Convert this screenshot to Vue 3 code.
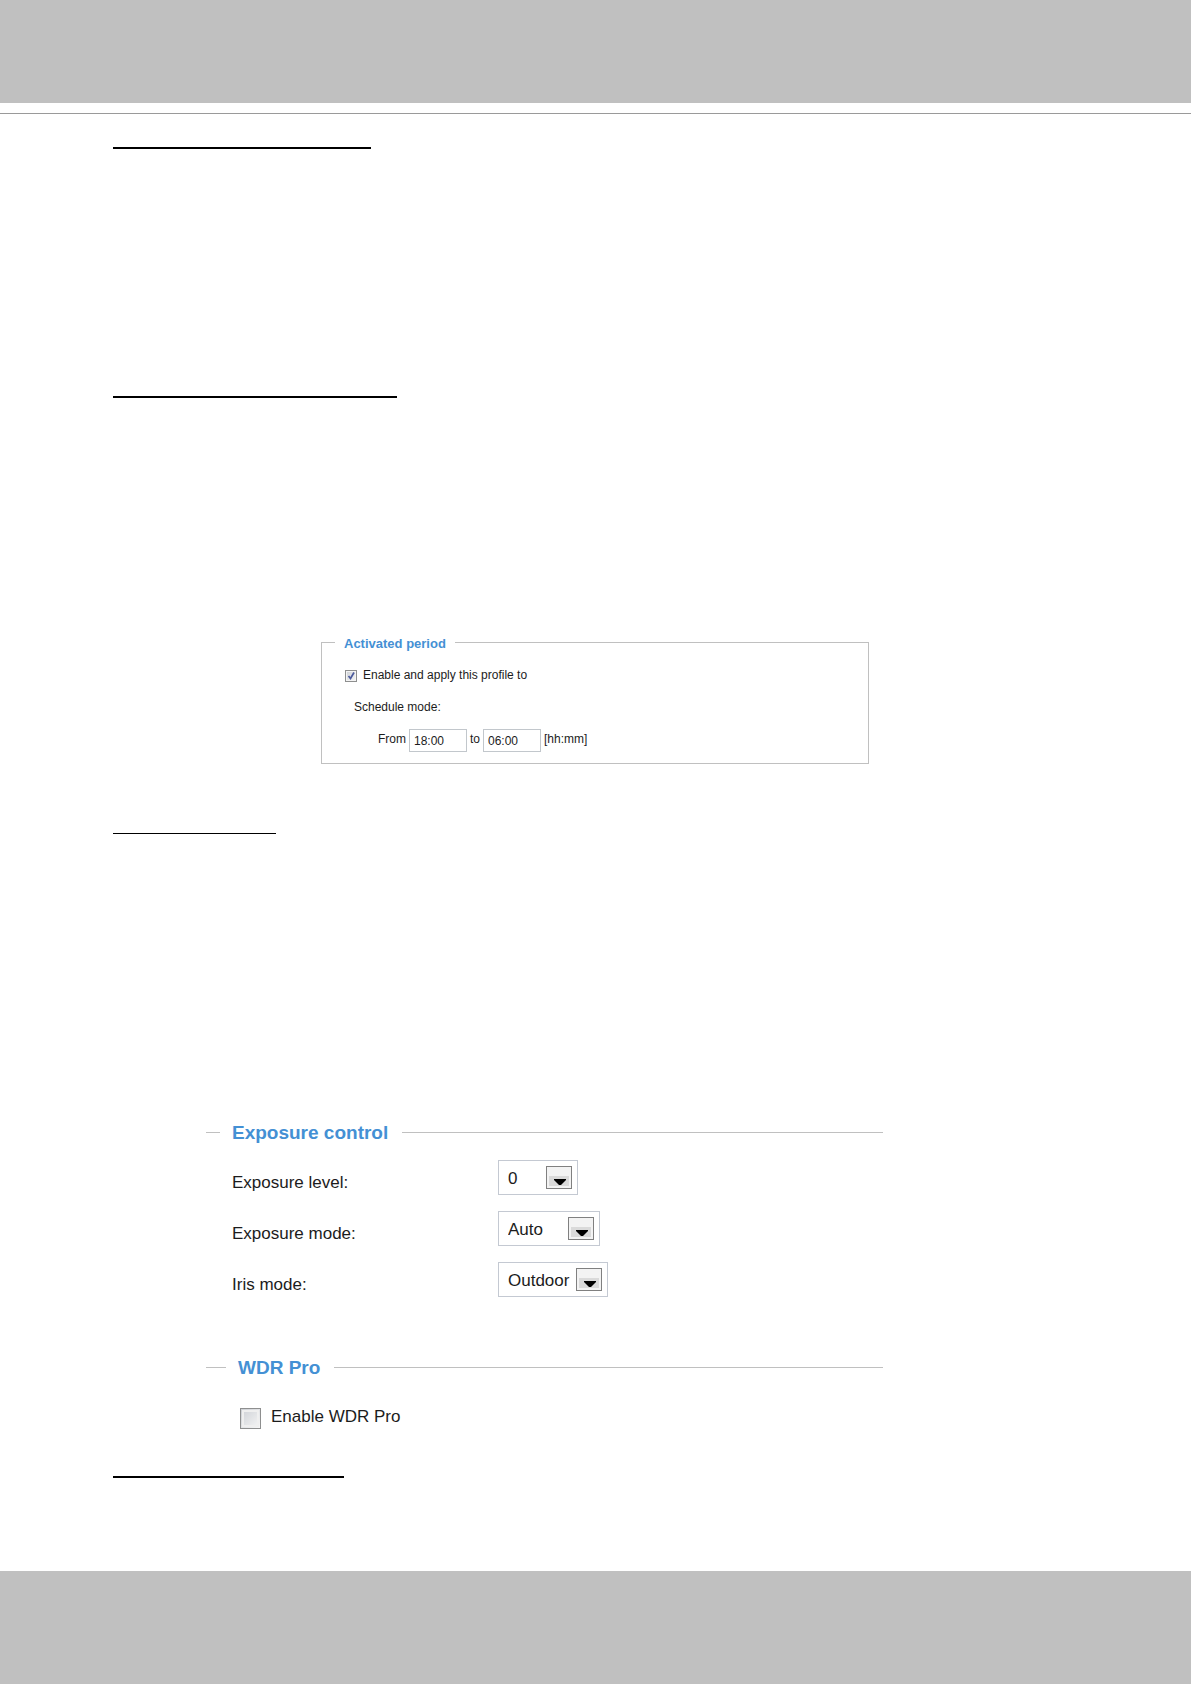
<script setup>
import { ref } from 'vue'

const profileEnabled = ref(true)
const from = ref('18:00')
const to = ref('06:00')
const wdrEnabled = ref(false)

const exposure = ref([
  { id: 'level', label: 'Exposure level:', value: '0', options: ['0', '1', '2'] },
  { id: 'mode', label: 'Exposure mode:', value: 'Auto', options: ['Auto', 'Manual'] },
  { id: 'iris', label: 'Iris mode:', value: 'Outdoor', options: ['Outdoor', 'Indoor'] },
])
</script>

<template>
  <div class="page">
    <header class="band"></header>
    <main class="body">
      <hr class="rule rule-first" />
      <hr class="rule rule-second" />

      <fieldset class="period">
        <legend>Activated period</legend>
        <label class="check">
          <input v-model="profileEnabled" type="checkbox" />
          <span>Enable and apply this profile to</span>
        </label>
        <div class="schedule">Schedule mode:</div>
        <div class="times">
          <label for="from">From</label>
          <input id="from" v-model="from" type="text" />
          <label for="to">to</label>
          <input id="to" v-model="to" type="text" />
          <span class="hint">[hh:mm]</span>
        </div>
      </fieldset>

      <hr class="rule rule-third" />

      <fieldset class="group exposure">
        <legend>Exposure control</legend>
        <div v-for="row in exposure" :key="row.id" class="row">
          <label :for="row.id">{{ row.label }}</label>
          <div class="picker" :class="row.id">
            <select :id="row.id" v-model="row.value">
              <option v-for="o in row.options" :key="o">{{ o }}</option>
            </select>
            <svg class="arrow" viewBox="0 0 26 23" aria-hidden="true">
              <rect x="0.500" y="0.500" width="25" height="22" fill="#f3f3f3" stroke="#808080" />
              <rect x="3" y="10" width="20" height="10" fill="#dadada" />
              <path d="M8 13h12v1L15 19h-2l-5-5z" fill="#000" />
            </svg>
          </div>
        </div>
      </fieldset>

      <fieldset class="group wdr">
        <legend>WDR Pro</legend>
        <label class="check big">
          <input v-model="wdrEnabled" type="checkbox" />
          <span>Enable WDR Pro</span>
        </label>
      </fieldset>

      <hr class="rule rule-last" />
    </main>
    <footer class="band foot"></footer>
  </div>
</template>

<style>
body {
  margin: 0;
  background: #fff;
}
</style>

<style scoped>
.page {
  display: flex;
  flex-direction: column;
  min-height: 100vh;
  font: 12px/16px "Liberation Sans", Arial, sans-serif;
  color: #1c1c1c;
}
.band {
  height: 103px;
  background: #c0c0c0;
}
.foot {
  height: 113px;
}
.body {
  flex: 1;
  margin-top: 10px;
  padding: 33px 113px 93px;
  border-top: 1px solid #9a9a9a;
}
.rule {
  height: 2px;
  margin: 0;
  border: 0;
  background: #000;
}
.rule-first {
  width: 258px;
}
.rule-second {
  width: 284px;
  margin-top: 247px;
}
.rule-third {
  width: 163px;
  height: 1px;
  margin-top: 69px;
}
.rule-last {
  width: 231px;
  margin-top: 47px;
}
fieldset {
  box-sizing: border-box;
  min-width: 0;
  border: 1px solid #c0c0c0;
}
legend {
  color: #4490d4;
  font-weight: bold;
}
.period {
  max-width: 548px;
  margin: 234px 0 0 208px;
  padding: 15px 13px 11px;
}
.period legend {
  padding: 4px 9px 0;
  font-size: 13px;
}
.check {
  display: flex;
  align-items: center;
  gap: 6px;
  padding-left: 10px;
}
.check input {
  appearance: none;
  width: 12px;
  height: 12px;
  margin: 2px 0 0;
  border: 1px solid #8e8f8f;
  outline: 1px solid #f4f4f4;
  outline-offset: -2px;
  background: linear-gradient(135deg, #cdd0d5, #f6f6f6);
}
.check input:checked {
  background: url("data:image/svg+xml,%3Csvg xmlns='http://www.w3.org/2000/svg' viewBox='0 0 10 10'%3E%3Cpath d='M2.500 5l2 2.500L8 1.500' fill='none' stroke='%234b5a9c' stroke-width='1.700'/%3E%3C/svg%3E") center / 10px 10px, linear-gradient(135deg, #cdd0d5, #f6f6f6);
}
.schedule {
  margin: 16px 0 14px;
  padding-left: 19px;
}
.times {
  display: flex;
  align-items: center;
  gap: 3px;
  padding-left: 43px;
}
.times input {
  box-sizing: border-box;
  width: 58px;
  height: 23px;
  padding: 1px 4px 0;
  border: 1px solid #c2c7cc;
  font: inherit;
  color: inherit;
}
.times label,
.hint {
  padding-bottom: 3px;
}
.group {
  max-width: 677px;
  margin: 0 0 0 93px;
  border-width: 1px 0 0;
  font-size: 17px;
  line-height: 24px;
}
.group legend {
  padding: 2px 14px 0 12px;
  font-size: 19px;
}
.exposure {
  display: flex;
  flex-direction: column;
  gap: 16px;
  margin-top: 285px;
  padding: 15px 0 0 14px;
}
.row {
  display: grid;
  grid-template-columns: 266px auto;
  justify-content: start;
  align-items: center;
  padding-left: 12px;
}
.row label {
  padding-top: 10px;
}
.picker {
  display: grid;
  align-items: center;
}
.picker > * {
  grid-area: 1 / 1;
}
.picker select {
  appearance: none;
  box-sizing: border-box;
  width: 100%;
  height: 35px;
  padding: 2px 34px 0 9px;
  border: 1px solid #c4c9d2;
  border-radius: 0;
  background: #fff;
  font: inherit;
  color: inherit;
}
.arrow {
  width: 26px;
  height: 23px;
  margin-right: 6px;
  justify-self: end;
  pointer-events: none;
}
.level {
  width: 80px;
}
.mode {
  width: 102px;
}
.iris {
  width: 110px;
}
.wdr {
  margin-top: 57px;
  padding: 28px 0 0 20px;
}
.big {
  gap: 10px;
  padding-left: 14px;
}
.big input {
  width: 21px;
  height: 21px;
  margin: 0;
  outline: 2px solid #efefef;
  outline-offset: -4px;
}
.big span {
  padding-bottom: 3px;
  line-height: 18px;
}
</style>
